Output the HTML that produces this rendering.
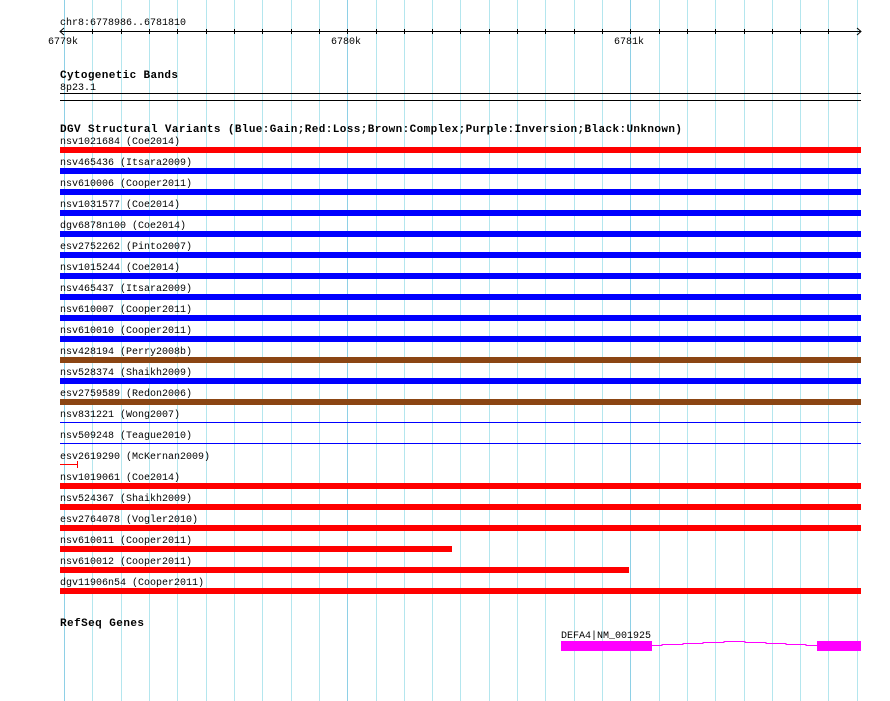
<!DOCTYPE html>
<html><head><style>
html,body{margin:0;padding:0;background:#fff}
svg{display:block}
text{font-family:"Liberation Mono",monospace;font-size:10px;fill:#000}
.b{font-weight:bold;font-size:11px}
</style></head><body>
<svg width="890" height="701" xmlns="http://www.w3.org/2000/svg">
<g stroke="#b4e6ee" stroke-width="1">
<line x1="92.5" y1="0" x2="92.5" y2="701"/><line x1="121.5" y1="0" x2="121.5" y2="701"/><line x1="149.5" y1="0" x2="149.5" y2="701"/><line x1="177.5" y1="0" x2="177.5" y2="701"/><line x1="206.5" y1="0" x2="206.5" y2="701"/><line x1="234.5" y1="0" x2="234.5" y2="701"/><line x1="262.5" y1="0" x2="262.5" y2="701"/><line x1="291.5" y1="0" x2="291.5" y2="701"/><line x1="319.5" y1="0" x2="319.5" y2="701"/><line x1="376.5" y1="0" x2="376.5" y2="701"/><line x1="404.5" y1="0" x2="404.5" y2="701"/><line x1="432.5" y1="0" x2="432.5" y2="701"/><line x1="460.5" y1="0" x2="460.5" y2="701"/><line x1="489.5" y1="0" x2="489.5" y2="701"/><line x1="517.5" y1="0" x2="517.5" y2="701"/><line x1="545.5" y1="0" x2="545.5" y2="701"/><line x1="574.5" y1="0" x2="574.5" y2="701"/><line x1="602.5" y1="0" x2="602.5" y2="701"/><line x1="659.5" y1="0" x2="659.5" y2="701"/><line x1="687.5" y1="0" x2="687.5" y2="701"/><line x1="715.5" y1="0" x2="715.5" y2="701"/><line x1="744.5" y1="0" x2="744.5" y2="701"/><line x1="772.5" y1="0" x2="772.5" y2="701"/><line x1="800.5" y1="0" x2="800.5" y2="701"/><line x1="828.5" y1="0" x2="828.5" y2="701"/><line x1="857.5" y1="0" x2="857.5" y2="701"/>
</g>
<g stroke="#8ed0e6" stroke-width="1">
<line x1="64.5" y1="0" x2="64.5" y2="701"/><line x1="347.5" y1="0" x2="347.5" y2="701"/><line x1="630.5" y1="0" x2="630.5" y2="701"/>
</g>
<text x="60" y="25">chr8:6778986..6781810</text>
<g stroke="#000" stroke-width="1">
<line x1="60" y1="31.5" x2="861" y2="31.5"/>
<path d="M64 28 L60 31.5 L64 35 M857 28 L861 31.5 L857 35" fill="none"/>
<line x1="92.5" y1="29" x2="92.5" y2="34"/><line x1="121.5" y1="29" x2="121.5" y2="34"/><line x1="149.5" y1="29" x2="149.5" y2="34"/><line x1="177.5" y1="29" x2="177.5" y2="34"/><line x1="206.5" y1="29" x2="206.5" y2="34"/><line x1="234.5" y1="29" x2="234.5" y2="34"/><line x1="262.5" y1="29" x2="262.5" y2="34"/><line x1="291.5" y1="29" x2="291.5" y2="34"/><line x1="319.5" y1="29" x2="319.5" y2="34"/><line x1="347.5" y1="29" x2="347.5" y2="34"/><line x1="376.5" y1="29" x2="376.5" y2="34"/><line x1="404.5" y1="29" x2="404.5" y2="34"/><line x1="432.5" y1="29" x2="432.5" y2="34"/><line x1="460.5" y1="29" x2="460.5" y2="34"/><line x1="489.5" y1="29" x2="489.5" y2="34"/><line x1="517.5" y1="29" x2="517.5" y2="34"/><line x1="545.5" y1="29" x2="545.5" y2="34"/><line x1="574.5" y1="29" x2="574.5" y2="34"/><line x1="602.5" y1="29" x2="602.5" y2="34"/><line x1="630.5" y1="29" x2="630.5" y2="34"/><line x1="659.5" y1="29" x2="659.5" y2="34"/><line x1="687.5" y1="29" x2="687.5" y2="34"/><line x1="715.5" y1="29" x2="715.5" y2="34"/><line x1="744.5" y1="29" x2="744.5" y2="34"/><line x1="772.5" y1="29" x2="772.5" y2="34"/><line x1="800.5" y1="29" x2="800.5" y2="34"/><line x1="828.5" y1="29" x2="828.5" y2="34"/>
</g>
<text x="48" y="44">6779k</text><text x="331" y="44">6780k</text><text x="614" y="44">6781k</text>
<text class="b" x="60" y="78" textLength="118">Cytogenetic Bands</text>
<text x="60" y="90">8p23.1</text>
<rect x="60" y="93" width="801" height="1" fill="#000"/>
<rect x="60" y="100" width="801" height="1" fill="#000"/>
<text class="b" x="60" y="132" textLength="622">DGV Structural Variants (Blue:Gain;Red:Loss;Brown:Complex;Purple:Inversion;Black:Unknown)</text>
<g>
<text x="60" y="144">nsv1021684 (Coe2014)</text><rect x="60" y="147" width="801" height="6" fill="#f00"/>
<text x="60" y="165">nsv465436 (Itsara2009)</text><rect x="60" y="168" width="801" height="6" fill="#00f"/>
<text x="60" y="186">nsv610006 (Cooper2011)</text><rect x="60" y="189" width="801" height="6" fill="#00f"/>
<text x="60" y="207">nsv1031577 (Coe2014)</text><rect x="60" y="210" width="801" height="6" fill="#00f"/>
<text x="60" y="228">dgv6878n100 (Coe2014)</text><rect x="60" y="231" width="801" height="6" fill="#00f"/>
<text x="60" y="249">esv2752262 (Pinto2007)</text><rect x="60" y="252" width="801" height="6" fill="#00f"/>
<text x="60" y="270">nsv1015244 (Coe2014)</text><rect x="60" y="273" width="801" height="6" fill="#00f"/>
<text x="60" y="291">nsv465437 (Itsara2009)</text><rect x="60" y="294" width="801" height="6" fill="#00f"/>
<text x="60" y="312">nsv610007 (Cooper2011)</text><rect x="60" y="315" width="801" height="6" fill="#00f"/>
<text x="60" y="333">nsv610010 (Cooper2011)</text><rect x="60" y="336" width="801" height="6" fill="#00f"/>
<text x="60" y="354">nsv428194 (Perry2008b)</text><rect x="60" y="357" width="801" height="6" fill="#8b4513"/>
<text x="60" y="375">nsv528374 (Shaikh2009)</text><rect x="60" y="378" width="801" height="6" fill="#00f"/>
<text x="60" y="396">esv2759589 (Redon2006)</text><rect x="60" y="399" width="801" height="6" fill="#8b4513"/>
<text x="60" y="417">nsv831221 (Wong2007)</text><rect x="60" y="422" width="801" height="1" fill="#00f"/>
<text x="60" y="438">nsv509248 (Teague2010)</text><rect x="60" y="443" width="801" height="1" fill="#00f"/>
<text x="60" y="459">esv2619290 (McKernan2009)</text><rect x="60" y="464" width="18" height="1" fill="#f00"/><rect x="77" y="461" width="1" height="7" fill="#f00"/>
<text x="60" y="480">nsv1019061 (Coe2014)</text><rect x="60" y="483" width="801" height="6" fill="#f00"/>
<text x="60" y="501">nsv524367 (Shaikh2009)</text><rect x="60" y="504" width="801" height="6" fill="#f00"/>
<text x="60" y="522">esv2764078 (Vogler2010)</text><rect x="60" y="525" width="801" height="6" fill="#f00"/>
<text x="60" y="543">nsv610011 (Cooper2011)</text><rect x="60" y="546" width="392" height="6" fill="#f00"/>
<text x="60" y="564">nsv610012 (Cooper2011)</text><rect x="60" y="567" width="569" height="6" fill="#f00"/>
<text x="60" y="585">dgv11906n54 (Cooper2011)</text><rect x="60" y="588" width="801" height="6" fill="#f00"/>
</g>
<text class="b" x="60" y="626" textLength="84">RefSeq Genes</text>
<text x="561" y="638">DEFA4|NM_001925</text>
<rect x="561" y="641" width="91" height="10" fill="#f0f"/>
<rect x="817" y="641" width="44" height="10" fill="#f0f"/>
<path d="M652 645.5 L662 645.5 L662 644.5 L683 644.5 L683 643.5 L703 643.5 L703 642.5 L724 642.5 L724 641.5 L745 641.5 L745 642.5 L766 642.5 L766 643.5 L786 643.5 L786 644.5 L806 644.5 L806 645.5 L817 645.5" fill="none" stroke="#f0f" stroke-width="1"/>
</svg>
</body></html>
